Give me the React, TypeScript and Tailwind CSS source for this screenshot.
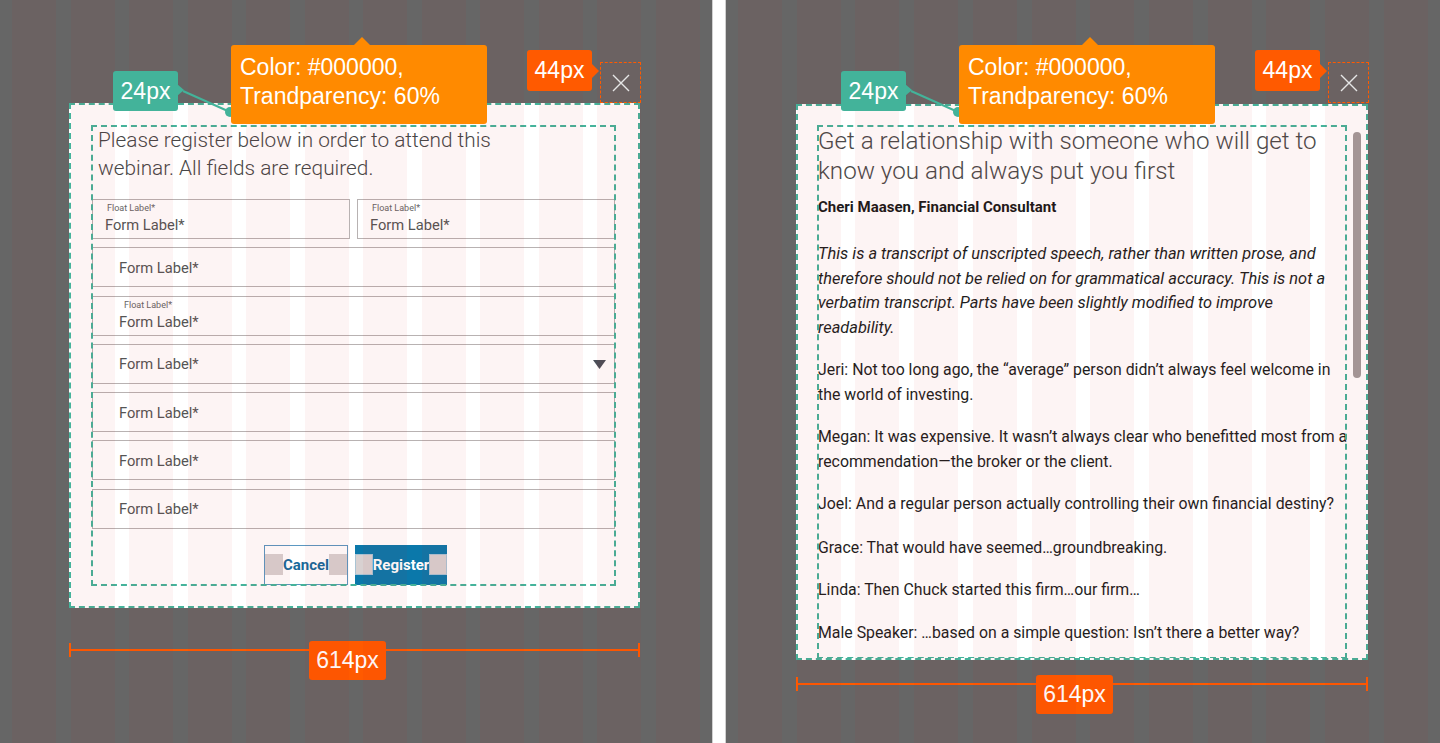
import React from "react";

// spec-sheet colours
// teal   #43b39a  (padding callouts / dashed guides)
// orange #ff8a00  (colour note)
// red    #ff5a00  (size callouts / rulers)

const columns = Array.from({ length: 12 }, (_, i) => i);

function GridOverlay() {
    return (
        <div className="pointer-events-none absolute inset-0 z-10 flex justify-between px-[12px]">
            {columns.map(c => (
                <div key={c} className="h-full w-[44px] bg-[#d30f0f0c]" />
            ))}
        </div>
    );
}

function Callouts({ shift }: { shift: string }) {
    return (
        <div className={`pointer-events-none absolute top-0 z-20 h-[130px] w-full font-['Liberation_Sans',Arial,sans-serif] text-[23px] text-white ${shift}`}>
            {/* 24px padding note */}
            <div className="absolute left-[113px] top-[71px] flex h-[40px] w-[65px] items-center justify-center rounded-[3px] bg-[#43b39a]">
                24px
                <span className="absolute right-[-6px] top-[13px] h-0 w-0 border-y-[6px] border-l-[7px] border-y-transparent border-l-[#43b39a]" />
            </div>
            <svg className="absolute left-[178px] top-[86px]" width="60" height="34" viewBox="0 0 60 34">
                <line x1="5" y1="5" x2="52" y2="26" stroke="#43b39a" strokeWidth="2" />
                <circle cx="52" cy="26" r="5" fill="#43b39a" />
            </svg>

            {/* overlay colour note */}
            <div className="absolute left-[231px] top-[45px] h-[79px] w-[256px] rounded-[3px] bg-[#ff8a00] pl-[9px] pt-[8px] leading-[29px]">
                <span className="absolute left-[123px] top-[-8px] h-0 w-0 border-x-[8px] border-b-[8px] border-x-transparent border-b-[#ff8a00]" />
                <p>Color: #000000,</p>
                <p>Trandparency: 60%</p>
            </div>

            {/* close size note */}
            <div className="absolute left-[527px] top-[50px] flex h-[41px] w-[65px] items-center justify-center rounded-[3px] bg-[#ff5a00]">
                44px
                <span className="absolute right-[-7px] top-[14px] h-0 w-0 border-y-[7px] border-l-[7px] border-y-transparent border-l-[#ff5a00]" />
            </div>
            <div className="absolute left-[600px] top-[62px] flex h-[41px] w-[41px] items-center justify-center border-[1.5px] border-dashed border-[#ff5a00]">
                <svg width="18" height="18" viewBox="0 0 18 18">
                    <path d="M1 1 L17 17 M17 1 L1 17" stroke="#e6e6e6" strokeWidth="1.4" fill="none" />
                </svg>
            </div>
        </div>
    );
}

function Ruler({ className }: { className: string }) {
    return (
        <div className={`relative flex h-[14px] items-center border-x-2 border-[#ff5a00] ${className}`}>
            <div className="h-[2px] w-full bg-[#ff5a00]" />
            <div className="absolute left-[238px] top-[-2px] flex h-[39px] w-[77px] items-center justify-center rounded-[3px] bg-[#ff5a00] font-['Liberation_Sans',Arial,sans-serif] text-[23px] text-white">
                614px
            </div>
        </div>
    );
}

// ======================================================================
function Field({ className, children }: { className?: string; children: React.ReactNode }) {
    return (
        <div className={`h-[40px] border border-[#b8b2b2] text-[#555555] ${className ?? ""}`}>
            {children}
        </div>
    );
}

function PlainField({ select }: { select?: boolean }) {
    return (
        <Field className="flex items-center justify-between pl-[26px] pr-[8px] pt-[1px]">
            <span className="text-[14.7px]">Form Label*</span>
            {select && (
                <svg width="13" height="9" viewBox="0 0 13 9">
                    <path d="M0 0 H13 L6.5 9 Z" fill="#4a4f59" />
                </svg>
            )}
        </Field>
    );
}

function FloatField({ floatPad, labelPad, className }: { floatPad: string; labelPad: string; className?: string }) {
    return (
        <Field className={`flex flex-col gap-[2px] pt-[3px] ${className ?? ""}`}>
            <span className={`text-[9px] leading-[11px] text-[#666666] ${floatPad}`}>Float Label*</span>
            <span className={`text-[14.7px] leading-[18px] ${labelPad}`}>Form Label*</span>
        </Field>
    );
}

function RegisterModal() {
    return (
        <div className="w-[571px] border-2 border-dashed border-[#45b39b] bg-white pb-[21px] pl-[21px] pr-[23px] pt-[21px] font-['Roboto',sans-serif]">
            <div className="flex flex-col outline-2 outline-offset-[-1px] outline-dashed outline-[#45b39b]">
                <p className="whitespace-nowrap pl-[6px] text-[20.8px] font-light leading-[28px] text-[#474747]">
                    Please register below in order to attend this<br />webinar. All fields are required.
                </p>

                <div className="mt-[17px] flex flex-col gap-[8.3px]">
                    <div className="flex gap-[7px]">
                        <FloatField className="flex-1" floatPad="pl-[14px]" labelPad="pl-[12px]" />
                        <FloatField className="flex-1" floatPad="pl-[14px]" labelPad="pl-[12px]" />
                    </div>
                    <PlainField />
                    <FloatField floatPad="pl-[31px]" labelPad="pl-[26px]" />
                    <PlainField select />
                    <PlainField />
                    <PlainField />
                    <PlainField />
                </div>

                <div className="mt-[16px] flex justify-center gap-[7px] pl-[4px]">
                    <button className="flex h-[40px] w-[84px] items-center justify-between border border-[#5b98c2] bg-white text-[15px] font-bold text-[#176a9b]">
                        <span className="h-[21px] w-[18px] bg-[#d8d1d1]" />
                        Cancel
                        <span className="h-[21px] w-[18px] bg-[#d8d1d1]" />
                    </button>
                    <button className="flex h-[40px] w-[92px] items-center justify-between bg-[#0b78aa] text-[15px] font-bold text-white">
                        <span className="h-[21px] w-[18px] border border-[#a9c4d4] bg-[#d8d1d1]" />
                        Register
                        <span className="h-[21px] w-[18px] border border-[#a9c4d4] bg-[#d8d1d1]" />
                    </button>
                </div>
            </div>
        </div>
    );
}

function TranscriptModal() {
    return (
        <div className="relative h-[556px] w-[572px] overflow-hidden border-2 border-dashed border-[#45b39b] bg-white px-[20px] pt-[20px] font-['Roboto',sans-serif]">
            <div className="h-full whitespace-nowrap text-[15.85px] leading-[24.5px] text-[#1e1e1e] outline-2 outline-offset-[-1px] outline-dashed outline-[#45b39b]">
                <h2 className="text-[24.2px] font-light leading-[30px] text-[#4a4a4a]">
                    Get a relationship with someone who will get to<br />know you and always put you first
                </h2>
                <p className="mt-[11px] text-[15px] font-bold leading-[20px] text-[#1a1a1a]">Cheri Maasen, Financial Consultant</p>
                <p className="mt-[25px] text-[16.4px] italic">
                    This is a transcript of unscripted speech, rather than written prose, and<br />
                    therefore should not be relied on for grammatical accuracy. This is not a<br />
                    verbatim transcript. Parts have been slightly modified to improve<br />
                    readability.
                </p>
                <p className="mt-[18px]">Jeri: Not too long ago, the “average” person didn’t always feel welcome in<br />the world of investing.</p>
                <p className="mt-[18px]">Megan: It was expensive. It wasn’t always clear who benefitted most from a<br />recommendation—the broker or the client.</p>
                <p className="mt-[18px]">Joel: And a regular person actually controlling their own financial destiny?</p>
                <p className="mt-[19px]">Grace: That would have seemed…groundbreaking.</p>
                <p className="mt-[18px]">Linda: Then Chuck started this firm…our firm…</p>
                <p className="mt-[18px]">Male Speaker: …based on a simple question: Isn’t there a better way?</p>
            </div>
            {/* scroll thumb */}
            <div className="absolute left-[555px] top-[26px] h-[246px] w-[8px] rounded-full bg-[#a29c9c]" />
        </div>
    );
}

// ======================================================================
export default function App() {
    return (
        <div className="flex h-[743px] w-[1440px] overflow-hidden bg-[#666666]">
            {/* LEFT: registration form */}
            <div className="relative h-full w-[712px]">
                <div className="flex flex-col pl-[69px] pt-[103px]">
                    <RegisterModal />
                    <Ruler className="mt-[35px] w-[571px]" />
                </div>
                <GridOverlay />
                <Callouts shift="left-0" />
            </div>

            {/* divider */}
            <div className="h-full w-[14px] border-x border-[#d0d0d0] bg-white" />

            {/* RIGHT: transcript */}
            <div className="relative h-full w-[714px]">
                <div className="flex flex-col pl-[70px] pt-[104px]">
                    <TranscriptModal />
                    <Ruler className="mt-[17px] w-[572px]" />
                </div>
                <GridOverlay />
                <Callouts shift="left-[2px]" />
            </div>
        </div>
    );
}
